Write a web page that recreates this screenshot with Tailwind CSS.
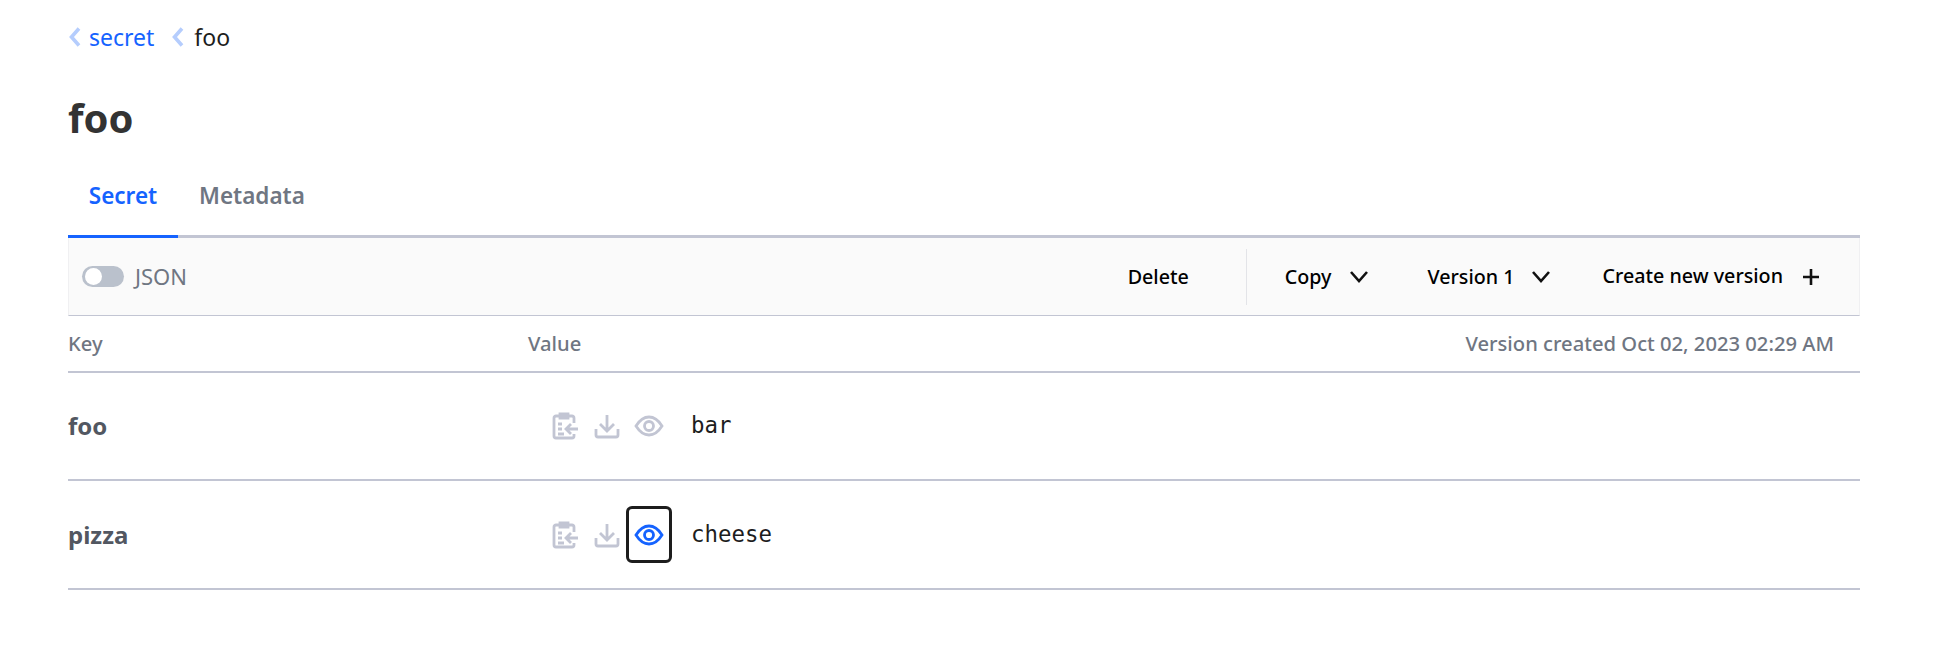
<!DOCTYPE html>
<html lang="en">
<head>
<meta charset="UTF-8" />
<title>foo</title>
<script src="https://cdn.jsdelivr.net/npm/@tailwindcss/browser@4"></script>
</head>
<body class="bg-white font-['Noto_Sans',sans-serif] text-[#1d1d1d] min-h-screen">
<div class="pl-[68px] pr-[82px]">
  <!-- Breadcrumb -->
  <nav class="flex items-center h-[24px] mt-[25px] text-[23px]">
    <svg class="w-[14px] h-[22px] mr-[7px]" viewBox="0 0 14 22" fill="none" stroke="#b5cdfd" stroke-width="3.6"><path d="M11 2.5 L3.5 11 L11 19.5"/></svg>
    <span class="text-[#1563ff]">secret</span>
    <svg class="w-[14px] h-[22px] ml-[17px] mr-[9px]" viewBox="0 0 14 22" fill="none" stroke="#b5cdfd" stroke-width="3.6"><path d="M11 2.5 L3.5 11 L11 19.5"/></svg>
    <span>foo</span>
  </nav>

  <h1 class="mt-[40px] h-[58px] leading-[58px] text-[40px] font-bold text-[#333]">foo</h1>

  <!-- Tabs -->
  <div class="mt-[22px] flex border-b-[3px] border-[#c2c5d3] h-[69px] text-[22.5px] font-semibold">
    <div class="w-[110px] h-[69px] border-b-[3px] border-[#1563ff] text-[#1563ff] text-center leading-[54px]">Secret</div>
    <div class="ml-[21px] text-[#6f7682] leading-[54px]">Metadata</div>
  </div>

  <!-- Toolbar -->
  <div class="flex items-center h-[78px] bg-[#fafafa] border-x border-x-[#f0f0f2] border-b border-b-[#c2c5d3] pl-[13px] pr-[38px]">
    <span class="relative w-[42px] h-[21px] rounded-full bg-[#bac1cc] mr-[11px]"><span class="absolute left-[3px] top-[2px] w-[17px] h-[17px] rounded-full bg-white"></span></span>
    <span class="text-[22px] text-[#6f7682]">JSON</span>
    <div class="ml-auto flex items-center text-[19.7px] font-medium text-black">
      <span>Delete</span>
      <span class="w-px h-[56px] bg-[#e3e4e8] ml-[57px] mr-[38px]"></span>
      <span>Copy</span>
      <svg class="w-[20px] h-[13px] ml-[17px]" viewBox="0 0 20 13" fill="none" stroke="#111" stroke-width="2.6"><path d="M2 2 L10 11 L18 2"/></svg>
      <span class="ml-[59px]">Version 1</span>
      <svg class="w-[20px] h-[13px] ml-[16px]" viewBox="0 0 20 13" fill="none" stroke="#111" stroke-width="2.6"><path d="M2 2 L10 11 L18 2"/></svg>
      <span class="ml-[52px] -mt-[2px]">Create new version</span>
      <svg class="w-[20px] h-[20px] ml-[18px]" viewBox="0 0 20 20" fill="none" stroke="#111" stroke-width="2.6"><path d="M10 2 V18 M2 10 H18"/></svg>
    </div>
  </div>

  <!-- Table head -->
  <div class="flex items-center h-[57px] border-b-[2px] border-[#c2c5d3] text-[20.2px] font-medium text-[#6f7682]">
    <div class="w-[460px]">Key</div>
    <div>Value</div>
    <div class="ml-auto pr-[26px]">Version created Oct 02, 2023 02:29 AM</div>
  </div>

  <!-- foo row -->
  <div class="flex items-center h-[108px] border-b-[2px] border-[#c2c5d3]">
    <div class="w-[483px] text-[24px] font-bold text-[#525761]">foo</div>
    <svg class="w-[28px] h-[28px]" viewBox="0 0 28 28" fill="none" stroke="#c2c5d3" stroke-width="2.8"><path d="M23 11 V6 a2 2 0 0 0 -2 -2 H5 a2 2 0 0 0 -2 2 V24 a2 2 0 0 0 2 2 H21 a2 2 0 0 0 2 -2 V22 M9 2 H17 V6 H9 Z M7 12 H11 M7 17 H11 M7 22 H13 M27 17 H15 M20 12 L15 17 L20 22"/></svg>
    <svg class="w-[26px] h-[26px] ml-[15px]" viewBox="0 0 26 26" fill="none" stroke="#c2c5d3" stroke-width="2.8"><path d="M13 2 V18 M6 11 L13 18 L20 11 M2 16 V22 a2 2 0 0 0 2 2 H22 a2 2 0 0 0 2 -2 V16"/></svg>
    <div class="w-[46px] h-[57px] ml-[6px] flex items-center justify-center border-[3px] border-transparent">
      <svg class="w-[30px] h-[22px]" viewBox="0 0 30 22" fill="none" stroke="#c2c5d3" stroke-width="2.8"><path d="M2 11 C7 3 11 2 15 2 C19 2 23 3 28 11 C23 19 19 20 15 20 C11 20 7 19 2 11 Z"/><circle cx="15" cy="11" r="4.5"/></svg>
    </div>
    <span class="ml-[19px] font-['DejaVu_Sans_Mono',monospace] text-[22.4px] text-[#1d1d1d]">bar</span>
  </div>

  <!-- pizza row -->
  <div class="flex items-center h-[109px] border-b-[2px] border-[#c2c5d3]">
    <div class="w-[483px] text-[24px] font-bold text-[#525761]">pizza</div>
    <svg class="w-[28px] h-[28px]" viewBox="0 0 28 28" fill="none" stroke="#c2c5d3" stroke-width="2.8"><path d="M23 11 V6 a2 2 0 0 0 -2 -2 H5 a2 2 0 0 0 -2 2 V24 a2 2 0 0 0 2 2 H21 a2 2 0 0 0 2 -2 V22 M9 2 H17 V6 H9 Z M7 12 H11 M7 17 H11 M7 22 H13 M27 17 H15 M20 12 L15 17 L20 22"/></svg>
    <svg class="w-[26px] h-[26px] ml-[15px]" viewBox="0 0 26 26" fill="none" stroke="#c2c5d3" stroke-width="2.8"><path d="M13 2 V18 M6 11 L13 18 L20 11 M2 16 V22 a2 2 0 0 0 2 2 H22 a2 2 0 0 0 2 -2 V16"/></svg>
    <div class="w-[46px] h-[57px] ml-[6px] flex items-center justify-center border-[3px] border-[#1d1d1d] rounded-[6px]">
      <svg class="w-[30px] h-[22px]" viewBox="0 0 30 22" fill="none" stroke="#1563ff" stroke-width="2.8"><path d="M2 11 C7 3 11 2 15 2 C19 2 23 3 28 11 C23 19 19 20 15 20 C11 20 7 19 2 11 Z"/><circle cx="15" cy="11" r="4.5"/></svg>
    </div>
    <span class="ml-[19px] font-['DejaVu_Sans_Mono',monospace] text-[22.4px] text-[#1d1d1d]">cheese</span>
  </div>
</div>
</body>
</html>
